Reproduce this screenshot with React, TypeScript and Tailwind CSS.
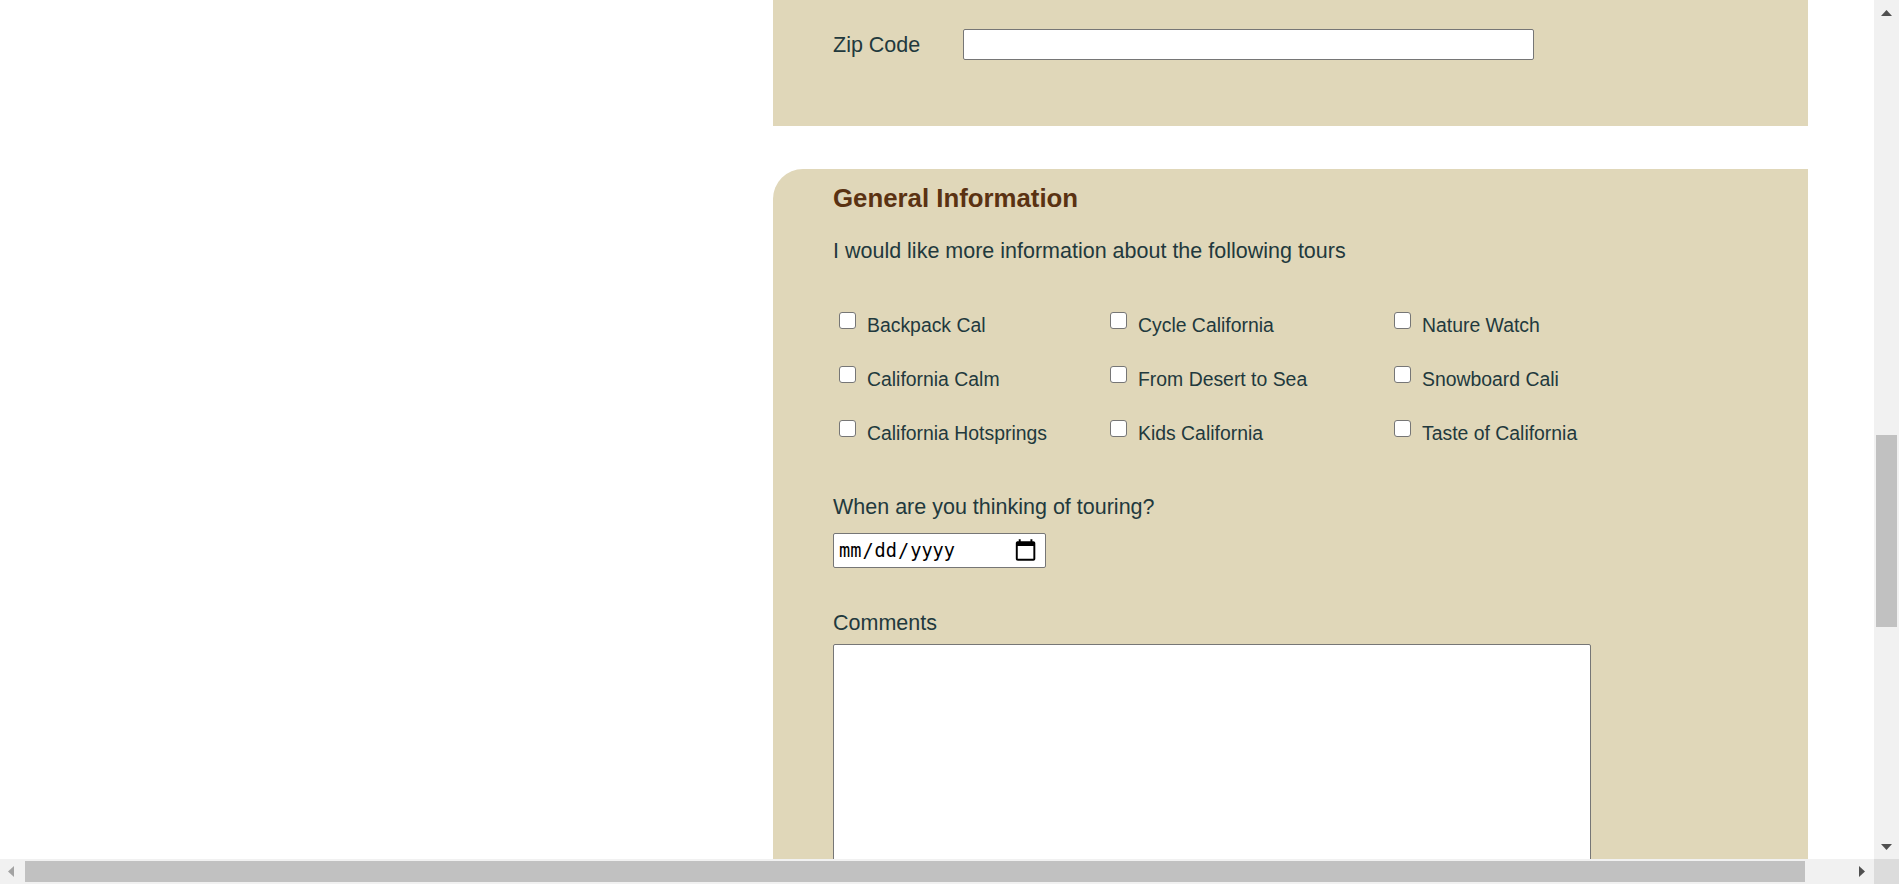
import React from "react";

const tours = [
  ["Backpack Cal", "Cycle California", "Nature Watch"],
  ["California Calm", "From Desert to Sea", "Snowboard Cali"],
  ["California Hotsprings", "Kids California", "Taste of California"],
];

const Arrow = ({ dir, light }: { dir: "up" | "down" | "left" | "right"; light?: boolean }) => {
  const points = {
    up: "0,6 5.5,0 11,6",
    down: "0,0 11,0 5.5,6",
    left: "6,0 6,11 0,5.5",
    right: "0,0 0,11 6,5.5",
  }[dir];
  const vertical = dir === "up" || dir === "down";
  return (
    <svg
      width={vertical ? 11 : 6}
      height={vertical ? 6 : 11}
      viewBox={vertical ? "0 0 11 6" : "0 0 6 11"}
    >
      <polygon points={points} fill={light ? "#a3a3a3" : "#505050"} />
    </svg>
  );
};

const TourOption = ({ label }: { label: string }) => (
  <label className="flex items-start h-[24px]">
    <input
      type="checkbox"
      className="appearance-none ml-[6px] w-[17px] h-[17px] border border-[#767676] rounded-[3px] bg-white shrink-0"
    />
    <span className="ml-[11px] mt-[2px] text-[19.4px] leading-[22px]">{label}</span>
  </label>
);

export default function App() {
  return (
    <div className="h-screen w-screen overflow-hidden flex flex-col bg-white font-['Liberation_Sans',Arial,sans-serif] text-[#22393d]">
      <div className="flex flex-1 min-h-0">
        {/* page content */}
        <div className="flex-1 min-w-0 overflow-hidden">
          <div className="ml-[773px] w-[1035px]">
            {/* address section (tail) */}
            <div className="h-[126px] bg-[#e0d7b9] pl-[60px] pt-[29px]">
              <div className="flex items-center">
                <span className="w-[130px] text-[21.5px] leading-[24px]">Zip Code</span>
                <input
                  type="text"
                  className="w-[571px] h-[31px] bg-white border border-[#767676] rounded-[2px]"
                />
              </div>
            </div>

            {/* general information */}
            <div className="mt-[43px] bg-[#e0d7b9] rounded-tl-[30px] pl-[60px] pt-[14px] pb-[40px]">
              <h2 className="text-[25.8px] leading-[30px] font-bold text-[#5a3212]">
                General Information
              </h2>
              <p className="mt-[26px] text-[21.5px] leading-[24px]">
                I would like more information about the following tours
              </p>

              <div className="mt-[49px] grid grid-cols-[271px_284px_auto] gap-y-[30px]">
                {tours.flat().map((t) => (
                  <TourOption key={t} label={t} />
                ))}
              </div>

              <p className="mt-[51px] text-[21.5px] leading-[24px]">
                When are you thinking of touring?
              </p>
              <input
                type="date"
                className="mt-[14px] block w-[213px] h-[35px] px-[4px] bg-white border border-[#767676] rounded-[2px] text-black text-[18.6px] font-['DejaVu_Sans_Mono',monospace] [&::-webkit-calendar-picker-indicator]:scale-[1.3] [&::-webkit-calendar-picker-indicator]:mr-[4px]"
              />

              <p className="mt-[43px] text-[21.5px] leading-[24px]">Comments</p>
              <textarea className="mt-[9px] block w-[758px] h-[320px] bg-white border border-[#767676] rounded-[2px] resize-none" />
            </div>
          </div>
        </div>

        {/* vertical scrollbar */}
        <div className="w-[25px] bg-[#f1f1f1] flex flex-col items-center">
          <div className="h-[25px] w-full flex items-start justify-center pt-[10px]">
            <Arrow dir="up" />
          </div>
          <div className="mt-[410px] w-[21px] h-[192px] bg-[#c1c1c1]" />
          <div className="flex-1" />
          <div className="h-[25px] w-full flex items-center justify-center">
            <Arrow dir="down" />
          </div>
        </div>
      </div>

      {/* horizontal scrollbar */}
      <div className="h-[25px] flex">
        <div className="flex-1 bg-[#f1f1f1] flex items-center">
          <div className="w-[25px] h-full flex items-center justify-center pr-[4px]">
            <Arrow dir="left" light />
          </div>
          <div className="w-[1780px] h-[21px] bg-[#c1c1c1]" />
          <div className="flex-1" />
          <div className="w-[25px] h-full flex items-center justify-center">
            <Arrow dir="right" />
          </div>
        </div>
        <div className="w-[25px] bg-[#dcdcdc]" />
      </div>
    </div>
  );
}
